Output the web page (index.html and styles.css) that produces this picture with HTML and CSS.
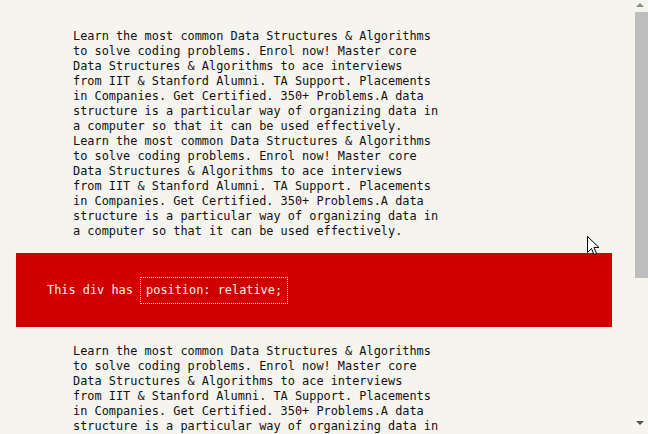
FILE: index.html
```html
<!DOCTYPE html>
<html>
<head>
<meta charset="utf-8">
<link rel="stylesheet" href="styles.css">
</head>
<body>
<div class="page">
  <p class="copy">Learn the most common Data Structures &amp; Algorithms to solve coding problems. Enrol now! Master core Data Structures &amp; Algorithms to ace interviews from&nbsp;IIT &amp; Stanford Alumni. TA Support. Placements in Companies. Get Certified. 350+ Problems.A data structure is a particular way of organizing data in a computer so that it can be used effectively. Learn the most common Data Structures &amp; Algorithms to solve coding problems. Enrol now! Master core Data Structures &amp; Algorithms to ace interviews from&nbsp;IIT &amp; Stanford Alumni. TA Support. Placements in Companies. Get Certified. 350+ Problems.A data structure is a particular way of organizing data in a computer so that it can be used effectively.</p>
  <div class="relbox">This div has <span class="code">position: relative;</span></div>
  <p class="copy second">Learn the most common Data Structures &amp; Algorithms to solve coding problems. Enrol now! Master core Data Structures &amp; Algorithms to ace interviews from&nbsp;IIT &amp; Stanford Alumni. TA Support. Placements in Companies. Get Certified. 350+ Problems.A data structure is a particular way of organizing data in a computer so that it can be used effectively. Learn the most common Data Structures &amp; Algorithms to solve coding problems.</p>
</div>
<div class="scrollbar">
  <div class="arrow up"></div>
  <div class="thumb"></div>
  <div class="arrow down"></div>
</div>
<svg class="cursor" width="13" height="20" viewBox="0 0 13 20">
  <path d="M0.5 0.5 L0.5 16.5 L4.5 12.5 L7 18.5 L9.5 17.5 L7 11.5 L12 11.5 Z" fill="#fff" stroke="#000" stroke-width="1"/>
</svg>
</body>
</html>
```
FILE: styles.css
```css
html, body {
  margin: 0;
  padding: 0;
  height: 100%;
  overflow: hidden;
}
body {
  background: #f5f4ef;
  font-family: "DejaVu Sans Mono", "Liberation Mono", monospace;
  font-size: 11.9px;
  line-height: 15px;
  color: #111;
}
.page {
  width: 596px;
  padding: 29px 0 0 16px;
}
.copy {
  margin: 0 0 0 57px;
  width: 368px;
}
.relbox {
  margin-top: 14px;
  height: 74px;
  background: #d10000;
  color: #fff4e4;
  padding-left: 31px;
  display: flex;
  align-items: center;
  white-space: pre;
}
.code {
  border: 1px dotted #fff4e4;
  padding: 5px 5px 5px 5px;
}
.second {
  margin-top: 17px;
}
.scrollbar {
  position: fixed;
  top: 0;
  right: 0;
  width: 17px;
  height: 434px;
  display: flex;
  flex-direction: column;
  align-items: center;
}
.arrow {
  width: 0;
  height: 0;
  border-left: 4px solid transparent;
  border-right: 4px solid transparent;
}
.up {
  margin-top: 3px;
  border-bottom: 4px solid #8a8a8a;
}
.thumb {
  margin-top: 5px;
  margin-left: 3px;
  width: 13px;
  height: 266px;
  background: #bdbdbd;
}
.down {
  margin-top: auto;
  margin-bottom: 9px;
  border-top: 4px solid #505050;
}
.cursor {
  position: fixed;
  left: 587px;
  top: 236px;
}
```
